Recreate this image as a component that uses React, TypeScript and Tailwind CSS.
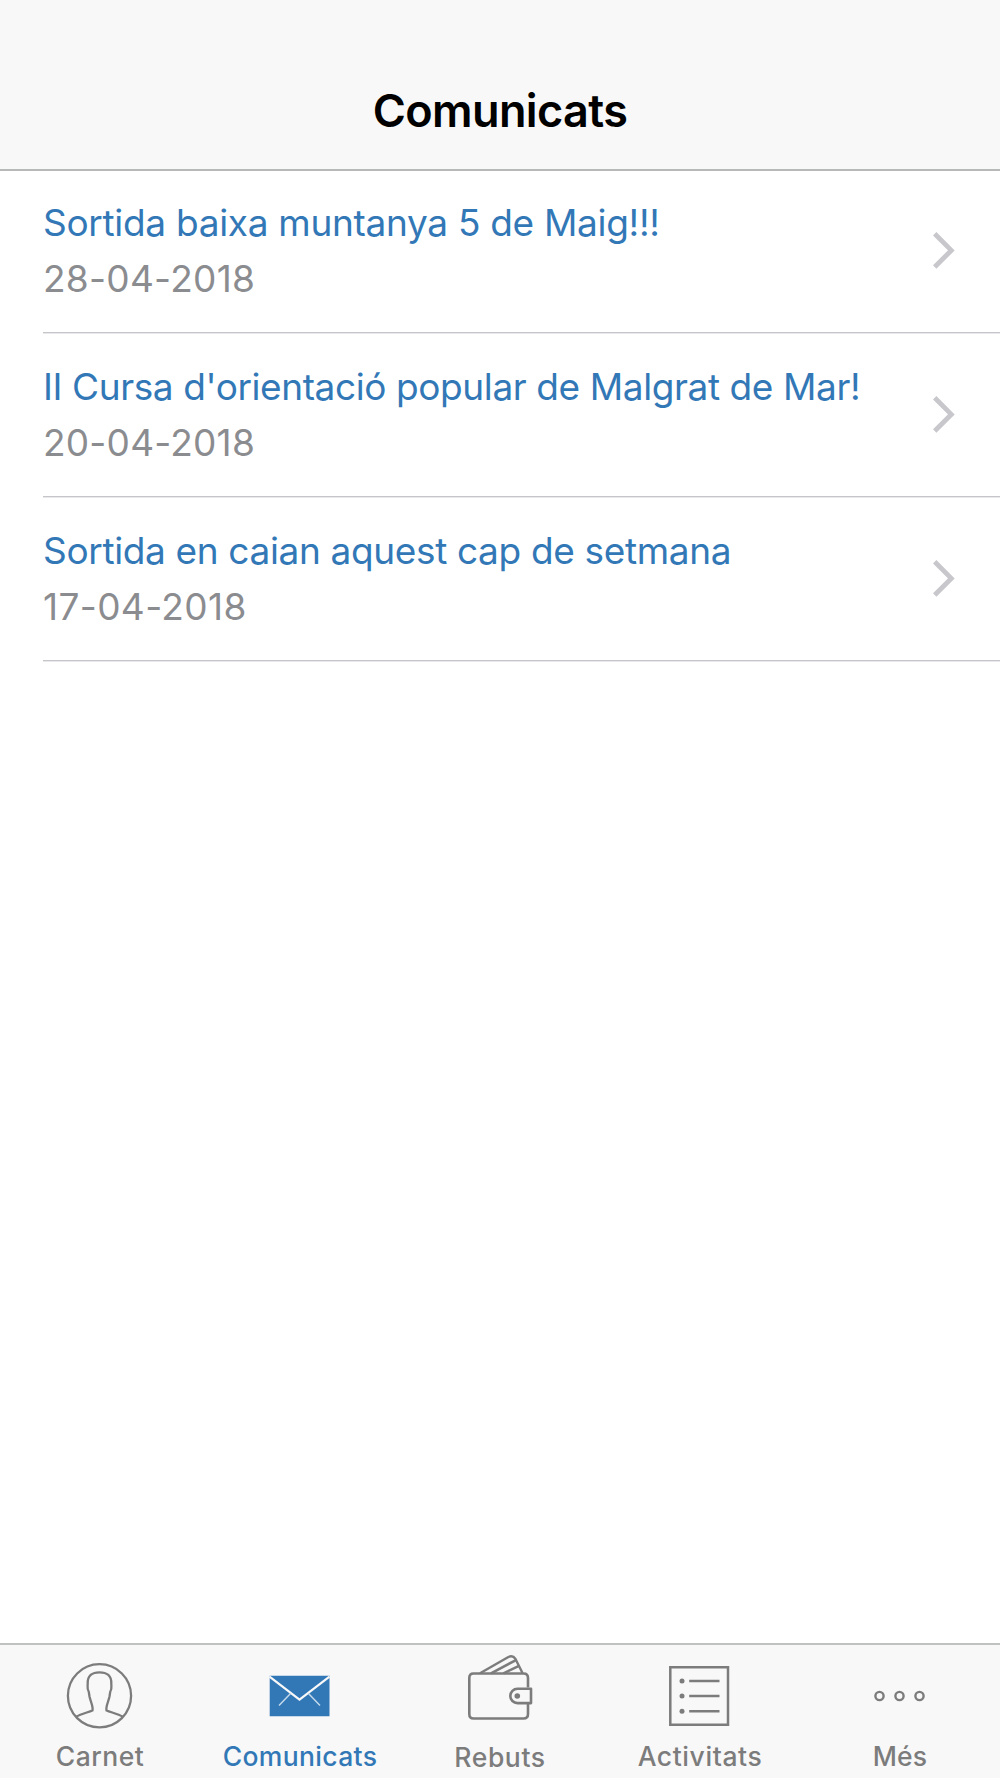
import type { ReactNode } from "react";

const notices = [
  { title: "Sortida baixa muntanya 5 de Maig!!!", date: "28-04-2018", spacing: "tracking-[-0.3px]", dateSpacing: "tracking-[0.28px]" },
  { title: "II Cursa d'orientació popular de Malgrat de Mar!", date: "20-04-2018", spacing: "tracking-[-0.4px]", dateSpacing: "tracking-[0.22px]" },
  { title: "Sortida en caian aquest cap de setmana", date: "17-04-2018", spacing: "tracking-[-0.35px]", dateSpacing: "tracking-[0.38px]" },
];

function Chevron() {
  return (
    <svg className="mt-[61px] mr-[44px] h-[40px] w-[26px] shrink-0" viewBox="0 0 26 40" fill="none" stroke="#c7c7cc" strokeWidth="4.8">
      <path d="M4.700 3.800 21.300 20.400 4.700 37" />
    </svg>
  );
}

function PersonIcon() {
  return (
    <svg className="h-[91px] w-[120px]" viewBox="0 1 120 91" fill="none" stroke="#7c7c7c" strokeWidth="2.300">
      <circle cx="59.500" cy="51.800" r="31.600" />
      <path d="M36 72.800C41 70 47.500 68.500 52.500 66.500C53.500 62.500 50.500 57.500 49.500 52.500L48.800 48C47 45 47.500 43.500 47.700 40C47.200 31.500 52.300 28.300 59.500 28.300S71.800 31.500 71.300 40C71.500 43.500 72 45 70.200 48L69.500 52.500C68.500 57.500 65.500 62.500 66.500 66.500C71.500 68.500 78 70 83 72.800" />
    </svg>
  );
}

function MailIcon() {
  return (
    <svg className="h-[91px] w-[120px]" viewBox="0 1 120 91" fill="none">
      <path d="M29.700 31.700h59.800v40.500H29.700z" fill="#3278b7" />
      <path d="M29.500 32.700 59.500 55.700 89.500 32.700" stroke="#f8f8f8" strokeWidth="2.200" />
      <path d="M50.500 49.500 39 61.500M68.500 49.500 80 61.500" stroke="#c3d8ea" strokeWidth="1.500" />
    </svg>
  );
}

function WalletIcon() {
  return (
    <svg className="h-[91px] w-[120px]" viewBox="0 1 120 91" fill="none" stroke="#7c7c7c" strokeWidth="2.600">
      <path d="M88 43.500V34q0-4.500-4.500-4.500H33.500Q29.300 29.500 29.300 34V70Q29.300 74.500 33.500 74.500H83.500Q88 74.500 88 70V59" />
      <path d="M91 44.700H77.500a7.200 7.200 0 0 0 0 14.400H91z" strokeLinejoin="round" />
      <circle cx="77.300" cy="52" r="2.800" fill="#7c7c7c" stroke="none" />
      <path d="M40 29.300 67.500 13.500Q72.500 10.500 75.500 15L82.500 29" strokeWidth="2.400" />
      <path d="M51 29.300 75.500 16.300M63.500 29.300 79 21.800" strokeWidth="2.600" />
    </svg>
  );
}

function ListIcon() {
  return (
    <svg className="h-[91px] w-[120px]" viewBox="0 1 120 91" fill="none" stroke="#7c7c7c" strokeWidth="2.500">
      <path d="M30.300 23.200h57.700v57.500H30.300zM49.200 37h30.300M49.200 52h30.300M49.200 67.200h30.300" />
      <g fill="#7c7c7c" stroke="none">
        <circle cx="42" cy="37" r="2.500" />
        <circle cx="42" cy="52" r="2.500" />
        <circle cx="42" cy="67.200" r="2.500" />
      </g>
    </svg>
  );
}

function MoreIcon() {
  return (
    <svg className="h-[91px] w-[120px]" viewBox="0 1 120 91" fill="none" stroke="#7c7c7c" strokeWidth="2.400">
      <circle cx="39.500" cy="52" r="4.100" />
      <circle cx="59.500" cy="52" r="4.100" />
      <circle cx="79.500" cy="52" r="4.100" />
    </svg>
  );
}

type TabProps = { label: string; icon: ReactNode; spacing: string; active?: boolean; low?: boolean };

function Tab({ label, icon, spacing, active = false, low = false }: TabProps) {
  return (
    <button className="flex w-1/5 flex-col items-center">
      {icon}
      <span
        className={`text-[26.5px] leading-[32px] font-medium whitespace-nowrap ${spacing} ${low ? "mt-[5px]" : "mt-[4px]"} ${active ? "text-[#3278b7]" : "text-[#7c7c7c]"}`}
      >
        {label}
      </span>
    </button>
  );
}

export default function App() {
  return (
    <div className="flex h-[1778px] w-[1000px] flex-col overflow-hidden bg-white font-['Inter',sans-serif]">
      <header className="flex h-[171px] shrink-0 justify-center border-b-2 border-[#b7b8b8] bg-[#f8f8f8] pt-[83px]">
        <h1 className="text-[45px] leading-[56px] font-semibold tracking-[-0.6px] text-black">Comunicats</h1>
      </header>
      <main className="flex-1">
        <ul className="-mt-[2px] pl-[43px]">
          {notices.map((n) => (
            <li key={n.date} className="flex h-[164px] justify-between border-b border-[#c6c6ca] shadow-[0_1px_0_#e9e9eb]">
              <div className="pt-[31px]">
                <p className={`text-[37px] leading-[46px] whitespace-nowrap text-[#3278b7] ${n.spacing}`}>{n.title}</p>
                <p className={`mt-[10px] text-[37px] leading-[46px] text-[#8b8c90] ${n.dateSpacing}`}>{n.date}</p>
              </div>
              <Chevron />
            </li>
          ))}
        </ul>
      </main>
      <nav className="flex h-[135px] shrink-0 border-t-2 border-[#c0c1c1] bg-[#f8f8f8]">
        <Tab label="Carnet" icon={<PersonIcon />} spacing="tracking-[0.45px]" />
        <Tab label="Comunicats" icon={<MailIcon />} spacing="tracking-[0.35px]" active />
        <Tab label="Rebuts" icon={<WalletIcon />} spacing="tracking-[0.6px]" low />
        <Tab label="Activitats" icon={<ListIcon />} spacing="tracking-[0.6px]" />
        <Tab label="Més" icon={<MoreIcon />} spacing="tracking-[0.1px]" />
      </nav>
    </div>
  );
}
